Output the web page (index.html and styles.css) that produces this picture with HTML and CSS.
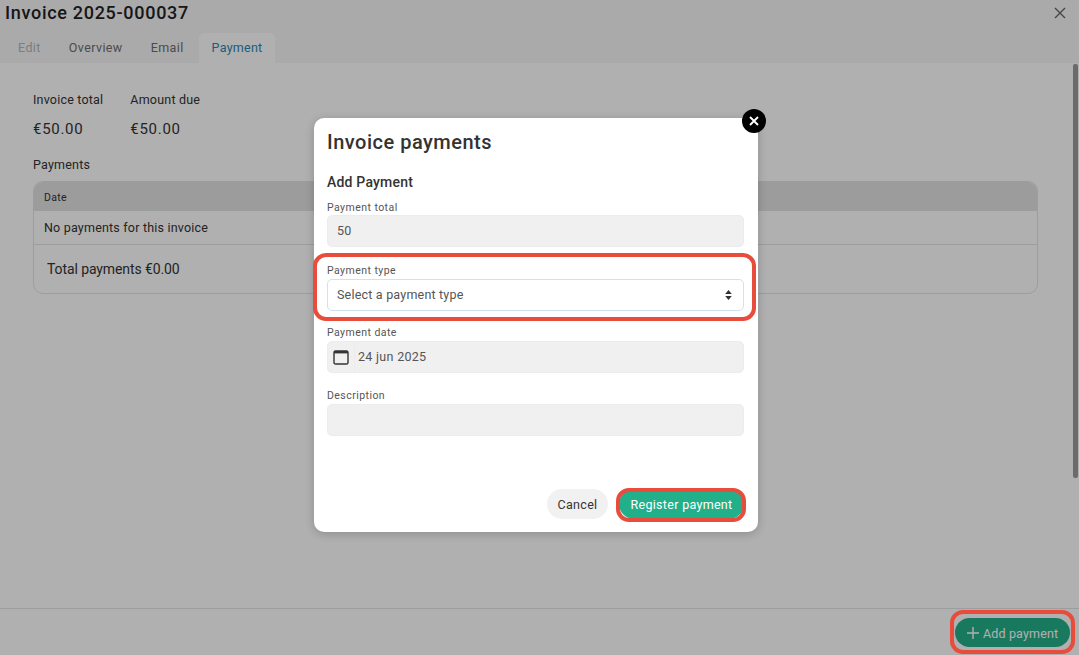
FILE: index.html
```html
<!DOCTYPE html>
<html>
<head>
  <meta charset="UTF-8">
  <title>Invoice 2025-000037</title>
  <link rel="stylesheet" href="styles.css">
</head>
<body>
  <div class="page">
    <header class="top">
      <div class="title-row">
        <h1>Invoice 2025-000037</h1>
        <svg class="top-close" width="14" height="14" viewBox="0 0 14 14"><path d="M2 2l10 10M12 2L2 12" stroke="#666" stroke-width="1.4" fill="none"/></svg>
      </div>
      <nav class="tabs">
        <span class="tab disabled">Edit</span>
        <span class="tab">Overview</span>
        <span class="tab">Email</span>
        <span class="tab active">Payment</span>
      </nav>
    </header>

    <main class="content">
      <div class="totals">
        <div>
          <div class="total-label">Invoice total</div>
          <div class="total-value">€50.00</div>
        </div>
        <div>
          <div class="total-label">Amount due</div>
          <div class="total-value">€50.00</div>
        </div>
      </div>
      <div class="payments-label">Payments</div>
      <div class="table">
        <div class="table-head">Date</div>
        <div class="table-row">No payments for this invoice</div>
        <div class="table-foot">Total payments €0.00</div>
      </div>
    </main>

    <footer class="bottom">
      <button class="add-button">
        <svg width="12" height="12" viewBox="0 0 12 12"><path d="M6 0v12M0 6h12" stroke="#fff" stroke-width="1.4" fill="none"/></svg>
        Add payment
      </button>
    </footer>
    <div class="scrollbar"></div>
  </div>

  <div class="scrim"></div>

  <section class="modal">
    <span class="modal-close">
      <svg width="10" height="10" viewBox="0 0 10 10"><path d="M1 1l8 8M9 1L1 9" stroke="#fff" stroke-width="1.9" fill="none"/></svg>
    </span>
    <h2>Invoice payments</h2>
    <h3>Add Payment</h3>

    <label class="field-label">Payment total</label>
    <div class="input">50</div>

    <label class="field-label type-label">Payment type</label>
    <div class="select">
      <span>Select a payment type</span>
      <svg width="7" height="10" viewBox="0 0 7 10"><path d="M3.5 0L6.8 4H.2zM3.5 10L.2 6h6.6z" fill="#333"/></svg>
    </div>

    <label class="field-label date-label">Payment date</label>
    <div class="date-group">
      <span class="date-icon">
        <svg width="16" height="16" viewBox="0 0 16 16"><rect x="1" y="2" width="14" height="13" rx="1.6" fill="none" stroke="#333" stroke-width="1.4"/><path d="M1 2h14v2.4H1z" fill="#333"/></svg>
      </span>
      <span class="date-value">24 jun 2025</span>
    </div>

    <label class="field-label desc-label">Description</label>
    <div class="input"></div>

    <div class="actions">
      <button class="cancel">Cancel</button>
      <button class="register">Register payment</button>
    </div>

    <div class="mark mark-type"></div>
    <div class="mark mark-register"></div>
  </section>

  <div class="mark mark-add"></div>
</body>
</html>
```

FILE: styles.css
```css
* {
  box-sizing: border-box;
}

html, body {
  margin: 0;
  height: 100%;
  overflow: hidden;
}

body {
  position: relative;
  font-family: Roboto, "Liberation Sans", sans-serif;
  color: #333;
  background: #fff;
}

.page {
  display: flex;
  flex-direction: column;
  height: 655px;
}

.top {
  background: #f6f6f6;
  height: 63px;
  flex: none;
}

.title-row {
  display: flex;
  justify-content: space-between;
  align-items: center;
  height: 33px;
  padding: 0 12px 8px 5px;
}

h1 {
  margin: 0;
  font-size: 18px;
  font-weight: 500;
  letter-spacing: 0.7px;
  color: #222;
}

.tabs {
  display: flex;
  padding-left: 4px;
  height: 30px;
}

.tab {
  padding: 7px 14px 0;
  font-size: 12.5px;
  letter-spacing: 0.4px;
  color: #6e6e6e;
}

.tab.disabled {
  color: #b5b5b5;
}

.tab.active {
  padding: 7px 13px 0;
  margin-left: 1px;
  background: #fff;
  color: #2b86b5;
  letter-spacing: 0.25px;
  border-radius: 5px 5px 0 0;
}

.content {
  flex: 1;
  padding: 29px 41px 0 33px;
}

.totals {
  display: flex;
  gap: 27px;
}

.total-label {
  font-size: 12.5px;
  letter-spacing: 0.2px;
}

.total-value {
  margin-top: 13px;
  font-size: 15px;
  letter-spacing: 0.7px;
}

.payments-label {
  margin-top: 19px;
  font-size: 12.5px;
  letter-spacing: 0.2px;
}

.table {
  margin-top: 9px;
  border: 1px solid #e4e4e4;
  border-radius: 10px;
  overflow: hidden;
  height: 113px;
}

.table-head {
  background: #e1e3e1;
  height: 29px;
  padding: 9px 10px 0;
  font-size: 10.5px;
  letter-spacing: 0.3px;
}

.table-row {
  height: 34px;
  padding: 9px 10px 0;
  border-bottom: 1px solid #e4e4e4;
  font-size: 12.5px;
  letter-spacing: 0.2px;
}

.table-foot {
  padding: 16px 13px 0;
  font-size: 14px;
  letter-spacing: -0.1px;
}

.bottom {
  flex: none;
  display: flex;
  justify-content: flex-end;
  height: 47px;
  padding: 9px 9px 0 0;
  border-top: 1px solid #e4e4e4;
}

.add-button {
  display: flex;
  align-items: center;
  gap: 4px;
  height: 29px;
  width: 115px;
  padding: 1px 0 0 12px;
  border: none;
  border-radius: 15px;
  background: #25b08a;
  color: #fff;
  font-family: inherit;
  font-size: 12.5px;
  letter-spacing: 0.15px;
}

.scrollbar {
  position: absolute;
  right: 1px;
  top: 64px;
  width: 5px;
  height: 414px;
  border-radius: 2px;
  background: #9c9c9c;
}

.scrim {
  position: absolute;
  inset: 0;
  background: rgba(0, 0, 0, 0.31);
}

.modal {
  position: absolute;
  left: 314px;
  top: 118px;
  width: 444px;
  height: 414px;
  padding: 13px 14px 0 13px;
  background: #fff;
  border-radius: 10px;
  box-shadow: 0 2px 10px rgba(0, 0, 0, 0.2);
  display: flex;
  flex-direction: column;
}

.modal-close {
  position: absolute;
  top: -9px;
  right: -8px;
  width: 24px;
  height: 24px;
  border-radius: 50%;
  background: #000;
  display: flex;
  align-items: center;
  justify-content: center;
}

h2 {
  margin: 0;
  font-size: 20px;
  font-weight: 500;
  line-height: 23px;
  letter-spacing: 0.5px;
}

h3 {
  margin: 20px 0 0;
  font-size: 14px;
  font-weight: 500;
  line-height: 17px;
  letter-spacing: 0.2px;
}

.field-label {
  display: block;
  margin-top: 10px;
  height: 14px;
  font-size: 10.5px;
  line-height: 14px;
  letter-spacing: 0.45px;
  color: #555;
}

.type-label {
  margin-top: 17px;
}

.date-label {
  margin-top: 15px;
}

.desc-label {
  margin-top: 16px;
  height: 15px;
}

.input,
.date-group {
  height: 32px;
  padding: 0 9px;
  background: #f0f0f0;
  border: 1px solid #ececec;
  border-radius: 5px;
  font-size: 12.5px;
  line-height: 29px;
  letter-spacing: 0.3px;
  color: #555;
}

.select {
  display: flex;
  justify-content: space-between;
  align-items: center;
  height: 32px;
  margin-top: 1px;
  padding: 0 11px 0 9px;
  background: #fff;
  border: 1px solid #cfe3ec;
  border-radius: 5px;
  font-size: 12.5px;
  letter-spacing: 0.2px;
  color: #555;
}

.select span {
  margin-top: -2px;
}

.date-group {
  display: flex;
  padding: 0;
  margin-top: 1px;
}

.date-icon {
  width: 27px;
  flex: none;
  display: flex;
  align-items: center;
  justify-content: center;
  border-right: 1px solid #ececec;
}

.date-value {
  padding: 0 0 0 3px;
}

.actions {
  display: flex;
  justify-content: flex-end;
  gap: 11px;
  margin-top: 53px;
}

.actions button {
  height: 30px;
  border: none;
  border-radius: 15px;
  font-family: inherit;
  font-size: 12.5px;
  letter-spacing: 0.3px;
}

.cancel {
  width: 61px;
  background: #f1f1f1;
  color: #333;
}

.register {
  width: 125px;
  background: #22b08a;
  color: #fff;
}

.mark {
  position: absolute;
  border: 4px solid #e74c3c;
  pointer-events: none;
}

.mark-type {
  left: -1px;
  top: 135px;
  width: 443px;
  height: 68px;
  border-radius: 13px;
}

.mark-register {
  left: 302px;
  top: 370px;
  width: 130px;
  height: 34px;
  border-radius: 13px;
}

.mark-add {
  left: 950px;
  top: 610px;
  width: 125px;
  height: 44px;
  border-radius: 13px;
}
```
